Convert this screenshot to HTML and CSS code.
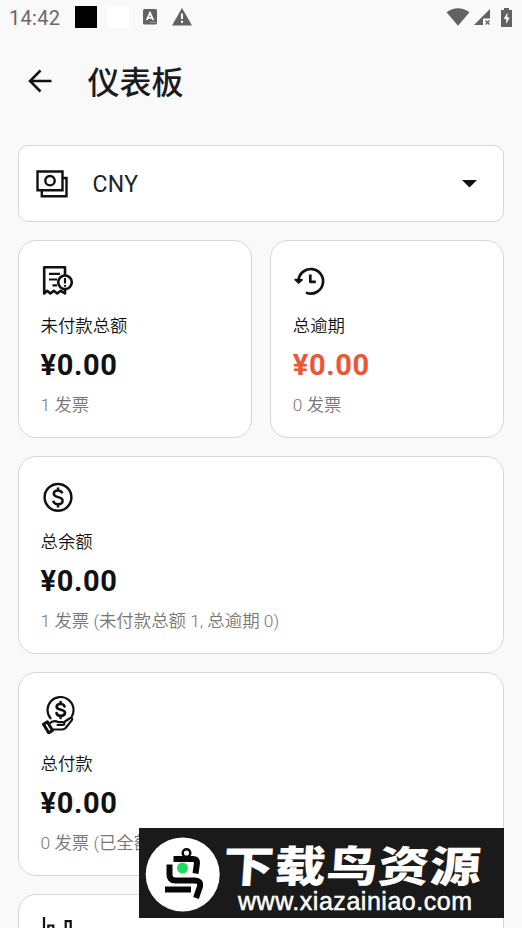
FILE: index.html
```html
<!DOCTYPE html>
<html lang="zh-CN">
<head>
<meta charset="utf-8">
<title>仪表板</title>
<link rel="stylesheet" href="styles.css">
</head>
<body>
<div class="screen">
  <div class="status">
    <span class="clock">14:42</span>
    <span class="block black"></span>
    <span class="block white"></span>
    <svg class="ic-lang" width="14" height="16" viewBox="0 0 14 16"><rect width="14" height="15.500" rx="1.500" fill="#626262"/><path d="M3.700 11 7 3.800 10.300 11M5 8.800h4" fill="none" stroke="#fff" stroke-width="1.700"/><path d="M7.500 13.300h5" stroke="#ddd" stroke-dasharray="1 1"/></svg>
    <svg class="ic-warn" width="20" height="18" viewBox="0 0 20 18"><path d="M10 0 20 17.500H0z" fill="#626262"/><path d="M10 5.500v5.500M10 12.800v2.200" stroke="#fff" stroke-width="2"/></svg>
    <span class="grow"></span>
    <svg class="ic-wifi" width="24" height="18" viewBox="0 0 24 18"><path d="M.5 4.200Q12-3.800 23.500 4.200L12 17.800z" fill="#626262"/></svg>
    <svg class="ic-signal" width="17" height="17" viewBox="0 0 17 17"><path d="M16 0v9.500H9V16H0z" fill="#626262"/><path d="m11.500 11.500 4 4m0-4-4 4" stroke="#626262" stroke-width="1.400"/></svg>
    <svg class="ic-battery" width="11" height="19" viewBox="0 0 11 19"><path d="M3 0h5v2h3v17H0V2h3z" fill="#626262"/><path d="M6.500 4.500 2.700 11h2.500v5L8.700 9.500H6.300z" fill="#fff"/></svg>
  </div>
  <header class="header">
    <svg width="24" height="24" viewBox="0 0 24 24"><path d="M23.500 12H2.500M12.500 1.500 2 12l10.500 10.500" fill="none" stroke="#111" stroke-width="2.500"/></svg>
    <h1>仪表板</h1>
  </header>
  <main class="content">
    <div class="select">
      <svg width="32" height="28" viewBox="0 0 32 28" fill="none" stroke="#111" stroke-width="2.400"><path d="M1.500 1.500h25v18.800h-25z"/><circle cx="14" cy="10.700" r="4.700"/><path d="M26.500 8h4v18.300H5.800v-6"/></svg>
      <span class="currency">CNY</span>
      <svg class="caret" width="15" height="8" viewBox="0 0 15 8"><path d="M0 0h15L7.500 7.500z" fill="#111"/></svg>
    </div>
    <div class="row">
      <section class="card">
        <svg class="icon" width="36" height="32" viewBox="0 0 36 32" fill="none" stroke="#111" stroke-width="2.600" stroke-linejoin="round"><path d="M24 10V2.300H3.200v26.200l3-2.700 3.200 2.700 3.400-2.700 3.400 2.700 3.500-2.700 4.300 2.700v-4.500" /><path d="M8 8.800h11M8 14.500h8M11.500 20.300h4.500" stroke-width="2.200"/><circle cx="24" cy="17.300" r="6.800"/><path d="M24 13v5.500M24 20v1.800" stroke-width="2.200"/></svg>
        <p class="label">未付款总额</p><p class="amount">¥0.00</p><p class="note">1 发票</p>
      </section>
      <section class="card">
        <svg class="icon" width="36" height="32" viewBox="0 0 36 32" fill="none" stroke="#111" stroke-width="2.700" stroke-linecap="round" stroke-linejoin="round"><path d="M5.500 15.800A12.300 12.300 0 1 1 14 28"/><path d="M2.200 14.600 5.600 17.800 9 14.800z" fill="#111" stroke-width="1.800"/><path d="M17.300 9.500v7.300h5.500" stroke-linecap="butt"/></svg>
        <p class="label">总逾期</p><p class="amount overdue">¥0.00</p><p class="note">0 发票</p>
      </section>
    </div>
    <section class="card">
      <svg class="icon" width="36" height="32" viewBox="0 0 36 32" fill="none" stroke="#111" stroke-width="2.500"><circle cx="17" cy="16.300" r="13.400"/><path d="M21.300 12.300c-.7-2-2.300-2.800-4.300-2.800-2.500 0-4.200 1.300-4.200 3.300 0 4.600 8.800 2 8.800 6.900 0 2.200-1.900 3.500-4.600 3.500-2.500 0-4.300-1.300-4.800-3.500M17 6.500v3.500M17 23v3.500"/></svg>
      <p class="label">总余额</p><p class="amount">¥0.00</p><p class="note">1 发票 (未付款总额 1, 总逾期 0)</p>
    </section>
    <section class="card">
      <svg class="icon tall" width="36" height="38" viewBox="0 0 36 38" fill="none" stroke="#111" stroke-width="2.200" stroke-linejoin="round" stroke-linecap="round"><path d="M9.500 22.300A13 13 0 1 1 30.800 20.500" stroke-width="2.200"/><path d="M23.500 10.500c-.4-1.700-1.800-2.500-3.900-2.500-2.300 0-3.900 1.100-3.900 2.800 0 4.100 8.300 1.800 8.300 5.900 0 2-1.800 3.100-4.200 3.100-2.500 0-4-1-4.300-2.800M19.600 6v2M19.600 20v2" stroke-width="2.700"/><path d="m2.500 28.200 4-2.300 5 8.500-3.700 2.500z" stroke-width="3"/><path d="M8.300 27.500c3.500-3.200 6.300-3 9.200-1.300h4.300c2 0 2 2.800 0 2.800h-5.300M23.300 26l5.200-3.500c2.100-1.300 3.500.2 2.200 1.900l-6.300 7.800c-1.200 1.200-2.200 1.300-4 1.300h-8"/></svg>
      <p class="label">总付款</p><p class="amount">¥0.00</p><p class="note">0 发票 (已全额付款 0)</p>
    </section>
    <section class="card">
      <svg class="icon chart" width="36" height="32" viewBox="0 0 36 32" fill="none" stroke="#111" stroke-width="2.200"><path d="M3-2v31h28M7.300 29V6.500h5V29M24.700 29V2.100h5V29"/></svg>
    </section>
  </main>
</div>
<div class="banner">
  <svg width="365" height="90" viewBox="0 0 365 90">
    <circle cx="43.700" cy="46.500" r="37" fill="#fff"/>
    <g fill="none" stroke="#080808" stroke-width="6"><circle cx="47.500" cy="25" r="3.800" stroke-width="2.500"/><path d="M34.500 31H54q4 0 4 4l-1.500 10.500"/><path d="M30.500 36.500v10q0 6 6 6H56q6 0 5 6l-4 11.500M26 61.500h26"/></g>
    <circle cx="43.500" cy="40" r="5.500" fill="#20dc61"/>
    <text class="brand" transform="translate(83 53.500) skewX(-4) scale(1 .84)" x="0" y="0" textLength="258">下载鸟资源</text>
    <text class="url" x="99" y="82" textLength="234">www.xiazainiao.com</text>
  </svg>
</div>
</body>
</html>
```
FILE: styles.css
```css
* { box-sizing: border-box; }
body { margin: 0; background: #f9f9f9; color: #111; font-family: Roboto, "Noto Sans CJK SC", sans-serif; }
.screen { height: 928px; overflow: hidden; }
svg { display: block; flex: none; }
.status { height: 36px; display: flex; align-items: center; padding: 0 10px 2px 9px; color: #686868; }
.clock { font-size: 20px; width: 66px; padding-top: 2px; letter-spacing: .3px; }
.block { width: 22px; height: 22px; }
.black { background: #000; }
.white { background: #fff; margin-left: 10px; }
.ic-lang { margin-left: 14px; }
.ic-warn { margin-left: 15px; }
.grow { flex: 1; }
.ic-signal { margin-left: 4px; }
.ic-battery { margin-left: 10px; }
.header { height: 90px; display: flex; align-items: center; padding: 0 0 0 28px; gap: 35.500px; }
h1 { margin: 0; padding-top: 3px; font-size: 32px; line-height: 40px; font-weight: 500; color: #1b1b1f; }
.content { display: flex; flex-direction: column; gap: 18px; padding: 19px 18px 0 17.500px; }
.select { height: 77px; display: flex; align-items: center; background: #fff; border: 1px solid #d6d6d6; border-radius: 10px; padding: 0 26px 0 17px; }
.currency { font-size: 23px; margin-left: 25px; flex: 1; padding-top: 1px; color: #222; letter-spacing: .3px; }
.row { display: grid; grid-template-columns: 1fr 1fr; gap: 18px; }
.card { background: #fff; border: 1px solid #d6d6d6; border-radius: 18px; min-height: 198px; padding: 24px 22px 0; }
.card p { margin: 0; white-space: nowrap; }
.icon { margin-bottom: 16px; }
.tall { margin: -1px 0 17px; }
.chart { overflow: visible; }
.card:has(.tall) { min-height: 204px; }
.label { font-size: 17.400px; line-height: 26px; font-weight: 350; }
.amount { font-size: 29px; line-height: 54px; margin: -1px 0 1px !important; font-weight: 700; letter-spacing: .6px; }
.card .overdue { color: #ed5535; }
.note { font-size: 17.400px; line-height: 24px; font-weight: 350; color: #777; }
.banner { position: absolute; left: 139px; top: 828px; background: #1a1a1a; }
.brand { font: 900 51px "Noto Sans CJK SC", sans-serif; fill: #fff; }
.url { font: 25px "Liberation Sans", sans-serif; fill: #fff; stroke: #fff; stroke-width: .5px; }
```
